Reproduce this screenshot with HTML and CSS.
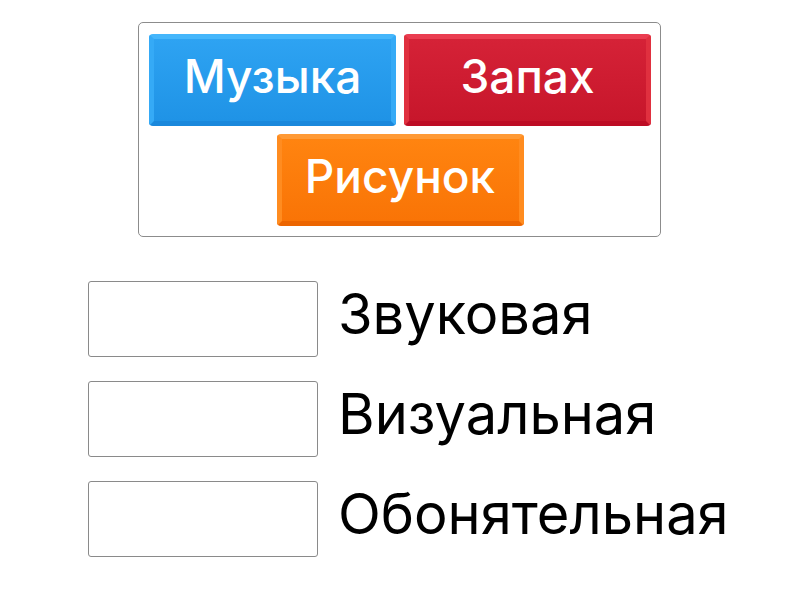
FILE: index.html
```html
<!DOCTYPE html>
<html lang="ru">
<head>
<meta charset="utf-8">
<link rel="stylesheet" href="styles.css">
</head>
<body>
<div class="page">
  <div class="bank">
    <div class="tile blue">Музыка</div>
    <div class="tile red">Запах</div>
    <div class="tile orange">Рисунок</div>
  </div>
  <div class="rows">
    <div class="row"><div class="slot"></div><div class="label">Звуковая</div></div>
    <div class="row"><div class="slot"></div><div class="label">Визуальная</div></div>
    <div class="row"><div class="slot"></div><div class="label">Обонятельная</div></div>
  </div>
</div>
</body>
</html>
```
FILE: styles.css
```css
html, body { margin: 0; padding: 0; background: #fff; }
body { font-family: Inter, "Noto Sans", sans-serif; width: 800px; height: 600px; overflow: hidden; }
.page { padding-top: 22px; }
.bank {
  margin: 0 0 0 138px;
  border: 1px solid #8c8c8c;
  border-radius: 5px;
  padding: 11px 9px 10px 10px;
  display: flex;
  flex-wrap: wrap;
  justify-content: center;
  gap: 8px;
  box-sizing: border-box;
  width: 523px;
}
.tile {
  width: 247px;
  height: 92px;
  box-sizing: border-box;
  border-radius: 4px;
  border: 5px solid;
  color: #fff;
  font-size: 46px;
  font-weight: 500;
  display: flex;
  align-items: center;
  justify-content: center;
  padding-bottom: 8px;
}
.blue {
  background: linear-gradient(#2ea3f2, #1f93e6);
  border-color: #45b6fb #35aaf6 #1a88dc #35aaf6;
}
.red {
  background: linear-gradient(#d52237, #c7162b);
  border-color: #ea3d51 #e0303f #bd0c24 #e0303f;
}
.orange {
  background: linear-gradient(#ff8410, #f97406);
  border-color: #ff9a35 #ff8c20 #ec6500 #ff8c20;
}
.rows {
  margin: 44px 0 0 88px;
  display: flex;
  flex-direction: column;
  gap: 24px;
}
.row { display: flex; align-items: center; gap: 20px; }
.slot {
  width: 230px;
  height: 76px;
  box-sizing: border-box;
  border: 1px solid #8a8a8a;
  border-radius: 3px;
}
.label { font-size: 56px; color: #000; line-height: 1; padding-bottom: 10px; }
```
